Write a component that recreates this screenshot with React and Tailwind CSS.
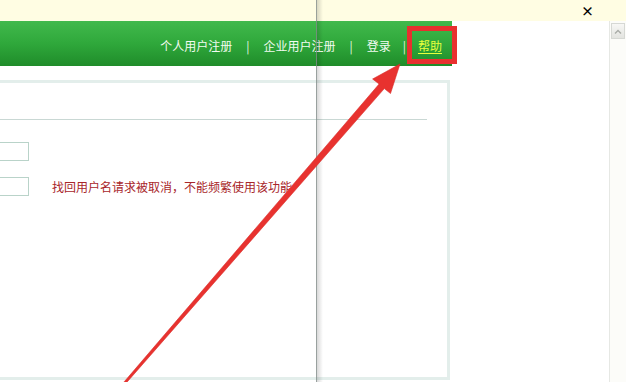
import { useMemo } from 'react'

const font = { fontFamily: '"Noto Sans CJK SC", "Noto Sans", sans-serif' }

function NavLink({ children }) {
  return <span className="text-[#f2fbf1]">{children}</span>
}

function Sep({ wide }) {
  return <span className={wide ? 'mx-[14px] text-[#e3f5e1]' : 'mx-[12px] text-[#e3f5e1]'}>|</span>
}

function Header() {
  return (
    <header className="flex h-[45px] w-[452px] items-center justify-end bg-gradient-to-b from-[#41b94c] via-[#2fa83b] to-[#1f8c2a] pr-[10px] pt-[5px] text-[12px] leading-none">
      <NavLink>个人用户注册</NavLink>
      <Sep wide />
      <NavLink>企业用户注册</NavLink>
      <Sep wide />
      <NavLink>登录</NavLink>
      <Sep />
      <span className="relative text-[#e8ff3c] underline underline-offset-2">
        帮助
        <span className="pointer-events-none absolute -bottom-[12px] -left-[11px] -right-[15px] -top-[14px] border-[5px] border-[#e8302f]" />
      </span>
    </header>
  )
}

function Panel() {
  return (
    <section className="mt-[14px] h-[300px] w-[450px] border-b-[3px] border-r-[3px] border-t-[3px] border-[#e3eeeb] bg-white pt-[36px]">
      <div className="h-px w-[427px] bg-[#c9d8d4]" />
      <div className="mt-[22px] h-[19px] w-[29px] border border-l-0 border-[#b9d3c9] bg-white" />
      <div className="mt-[16px] flex items-center">
        <div className="h-[19px] w-[29px] border border-l-0 border-[#b9d3c9] bg-white" />
        <span className="ml-[23px] text-[12px] leading-none text-[#a8262a]">找回用户名请求被取消，不能频繁使用该功能</span>
      </div>
    </section>
  )
}

function Scrollbar() {
  return (
    <aside className="flex w-[17px] flex-col border-l border-[#e6e8e4] bg-[#fcfcf9] pt-[2px]">
      <div className="ml-[1px] flex h-[16px] w-[14px] items-center justify-center border border-[#d6d8d4] bg-gradient-to-b from-[#f7f7f5] to-[#e3e4e0]">
        <svg width="8" height="5" viewBox="0 0 8 5">
          <path d="M1 4.5 L4 1.5 L7 4.5" fill="none" stroke="#a9aca7" strokeWidth="1.4" />
        </svg>
      </div>
    </aside>
  )
}

function Arrow() {
  // red annotation arrow pointing at the help link
  const points = useMemo(
    () => '400,64 390.5,93.5 384.3,88.6 125.8,383.5 124.2,381.8 379.1,84 372.6,79',
    []
  )
  return (
    <svg className="pointer-events-none absolute left-0 top-0" width="626" height="382" viewBox="0 0 626 382">
      <polygon points={points} fill="#e8322f" stroke="#d92b28" strokeWidth="0.6" strokeLinejoin="round" />
    </svg>
  )
}

export default function App() {
  return (
    <div className="relative h-[382px] w-[626px] overflow-hidden bg-white" style={font}>
      <div className="flex h-[21px] items-center justify-end bg-[#fffde3] pr-[32px]">
        <span className="text-[13px] font-bold leading-none text-black">×</span>
      </div>
      <div className="flex h-[361px]">
        <main className="flex-1">
          <Header />
          <Panel />
        </main>
        <Scrollbar />
      </div>

      {/* fold crease in the photographed page */}
      <div className="pointer-events-none absolute left-[316px] top-0 flex h-full">
        <div className="h-full w-px bg-[#7f8987]/80" />
        <div className="h-full w-[6px] bg-gradient-to-r from-black/15 to-transparent" />
      </div>

      <Arrow />
    </div>
  )
}
